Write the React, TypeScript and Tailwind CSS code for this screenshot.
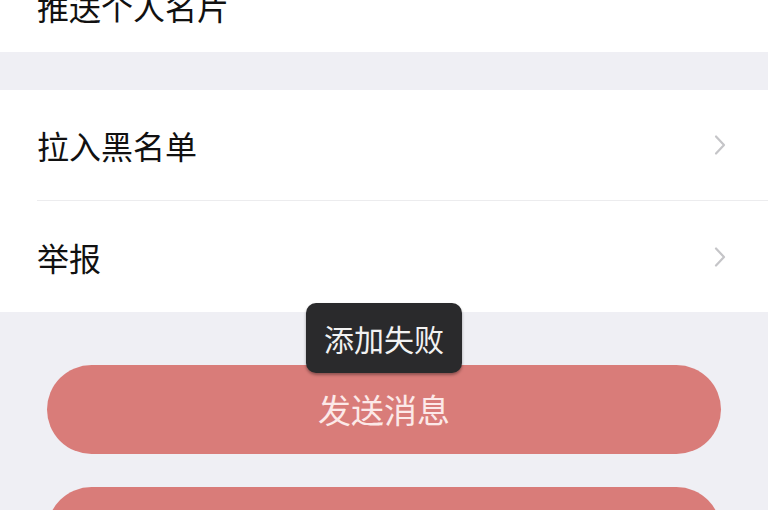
import React from "react";

const Chevron = () => (
  <svg width="16" height="24" viewBox="0 0 16 24" fill="none">
    <path d="M4 3.5L12 12L4 20.5" stroke="#c5c5c8" strokeWidth="2.2" strokeLinecap="round" strokeLinejoin="round" />
  </svg>
);

const Row = ({ label, h }: { label: string; h: string }) => (
  <div className={`flex items-center justify-between pl-[37px] pr-[40px] ${h}`}>
    <span className="text-[32px] leading-[32px] text-[#111111]">{label}</span>
    <Chevron />
  </div>
);

export default function App() {
  return (
    <div
      className="relative w-[768px] h-[510px] overflow-hidden bg-[#efeff4]"
      style={{ fontFamily: '"Noto Sans CJK SC", "Noto Sans", sans-serif' }}
    >
      {/* top row, scrolled off */}
      <div className="h-[52px] bg-white overflow-hidden pl-[37px]">
        <span className="block -mt-[10px] text-[32px] leading-[32px] text-[#111111]">推送个人名片</span>
      </div>

      <div className="mt-[38px] bg-white">
        <Row label="拉入黑名单" h="h-[110px]" />
        <div className="ml-[37px] h-px bg-[#ececee]" />
        <Row label="举报" h="h-[111px]" />
      </div>

      <div className="flex flex-col gap-[33px] px-[47px] pt-[53px]">
        <button className="h-[89px] rounded-full bg-[#d97c79] text-[33px] text-[#fce9e8]">发送消息</button>
        <button className="h-[89px] rounded-full bg-[#d97c79] text-[33px] text-[#fce9e8]">音视频通话</button>
      </div>

      {/* toast */}
      <div className="absolute left-1/2 top-[303px] -translate-x-1/2 h-[70px] px-[18px] flex items-center rounded-[10px] bg-[#2a2a2c] shadow-[0_2px_3px_rgba(0,0,0,0.35)]">
        <span className="text-[30px] leading-none text-[#f2f2f2] whitespace-nowrap">添加失败</span>
      </div>
    </div>
  );
}
